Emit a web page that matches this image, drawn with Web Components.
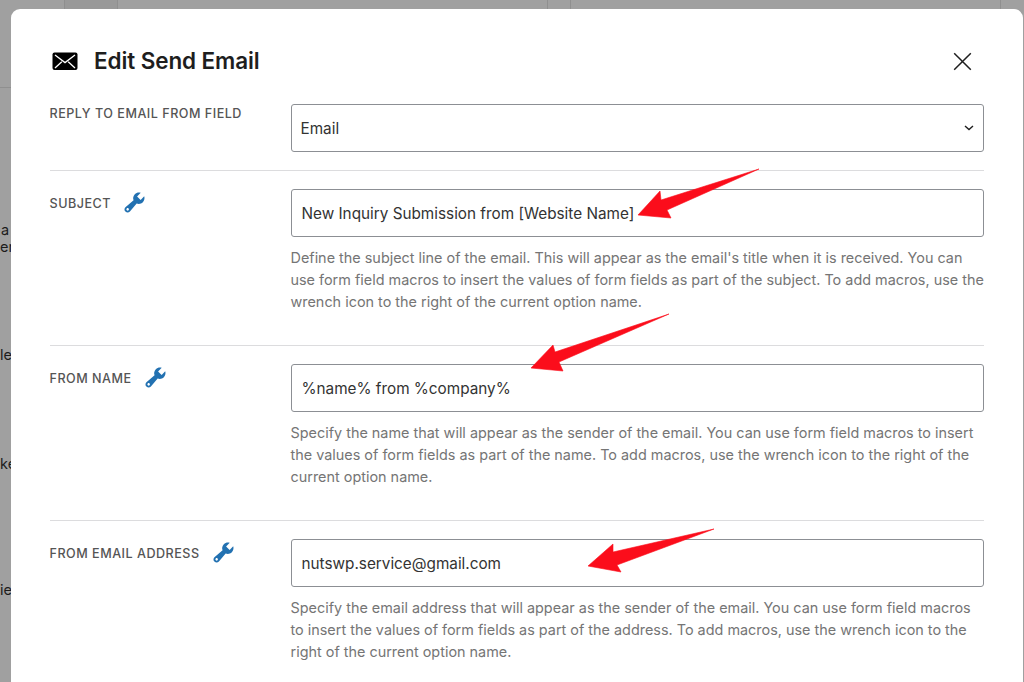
<!DOCTYPE html>
<html>
<head>
<meta charset="utf-8">
<style>
  html, body { margin: 0; height: 100%; overflow: hidden; }
  body { background: #a0a0a0; font-family: Inter, "Liberation Sans", sans-serif; }
</style>
</head>
<body>
<page-backdrop></page-backdrop>
<edit-modal heading="Edit Send Email">
  <field-row label="Reply to email from field" value="Email" select first></field-row>
  <field-row label="Subject" value="New Inquiry Submission from [Website Name]" wrench>
    Define the subject line of the email. This will appear as the email's title when it is received. You can use form field macros to insert the values of form fields as part of the subject. To add macros, use the wrench icon to the right of the current option name.
  </field-row>
  <field-row label="From Name" value="%name% from %company%" wrench>
    Specify the name that will appear as the sender of the email. You can use form field macros to insert the values of form fields as part of the name. To add macros, use the wrench icon to the right of the current option name.
  </field-row>
  <field-row label="From Email Address" value="nutswp.service@gmail.com" wrench>
    Specify the email address that will appear as the sender of the email. You can use form field macros to insert the values of form fields as part of the address. To add macros, use the wrench icon to the right of the current option name.
  </field-row>
</edit-modal>
<red-arrow points="759,169 661,200 660,191 638,215 671,218 667,210"></red-arrow>
<red-arrow points="669,314 555,352 553,345 531,368 563,371 559,362"></red-arrow>
<red-arrow points="714,529 613,552 613,544 588,566 621,572 617,565"></red-arrow>

<script>
const WRENCH = 'M16.68 9.77c-1.34 1.34-3.3 1.67-4.95.99l-5.41 6.52c-.99.99-2.59.99-3.58 0s-.99-2.59 0-3.58l6.52-5.41c-.68-1.65-.35-3.61.99-4.95 1.28-1.28 3.12-1.62 4.72-1.06l-2.89 2.89 2.82 2.82 2.86-2.9c.55 1.6.22 3.42-1.08 4.68zM3.81 16.21c.4.39 1.04.39 1.43 0 .4-.4.4-1.04 0-1.43-.39-.4-1.03-.4-1.43 0-.39.39-.39 1.03 0 1.43z';

class PageBackdrop extends HTMLElement {
  connectedCallback() {
    this.attachShadow({ mode: 'open' });
    this.shadowRoot.innerHTML = `
      <style>
        :host { position: absolute; inset: 0; display: block; overflow: hidden; font-size: 14.5px; color: #1c1c1c; }
        span { position: absolute; line-height: 18px; }
        i { position: absolute; background: #8f8f8f; }
        .cell { left: 65px; top: 0; width: 53px; height: 9px; background: #999; }
      </style>
      <i class="cell"></i>
      <i style="left:64px;top:0;width:1px;height:9px"></i>
      <i style="left:117px;top:0;width:1px;height:9px"></i>
      <i style="left:547px;top:0;width:1px;height:9px"></i>
      <i style="left:570px;top:0;width:1px;height:9px"></i>
      <i style="left:1000px;top:0;width:1px;height:9px"></i>
      <i style="left:0;top:87px;width:11px;height:1px"></i>
      <span style="left:1px;top:221px">a</span>
      <span style="left:0;top:238px">er</span>
      <span style="left:0;top:346px">le</span>
      <span style="left:0;top:455px">ke</span>
      <span style="left:0;top:581px">ie</span>
    `;
  }
}
customElements.define('page-backdrop', PageBackdrop);

class EditModal extends HTMLElement {
  connectedCallback() {
    this.attachShadow({ mode: 'open' });
    this.shadowRoot.innerHTML = `
      <style>
        :host {
          position: absolute;
          top: 9px;
          left: 11px;
          right: 1px;
          height: 720px;
          display: block;
          box-sizing: border-box;
          padding: 0 39px 0 38.5px;
          background: #fff;
          border-radius: 9px;
          color: #1e1e1e;
        }
        header {
          height: 95px;
          display: flex;
          align-items: flex-start;
          padding-top: 43px;
          box-sizing: border-box;
        }
        .mail { width: 26px; height: 18px; margin: 0 16.5px 0 2px; flex: none; }
        h1 { margin: -5px 0 0; font-size: 22.5px; line-height: 28px; font-weight: 600; letter-spacing: -0.1px; color: #1e1e1e; }
        .close { width: 19px; height: 19px; margin-left: auto; margin-right: 12px; flex: none; }
      </style>
      <header>
        <svg class="mail" viewBox="0 0 26 18">
          <rect x="0.5" y="0.5" width="25" height="17.5" rx="2" fill="#000"/>
          <path d="M3 3l10 7.6L23 3M3 16l6.8-6.2M23 16l-6.8-6.2" fill="none" stroke="#fff" stroke-width="1.3"/>
        </svg>
        <h1>${this.getAttribute('heading')}</h1>
        <svg class="close" viewBox="0 0 19 19">
          <path d="M1.2 1.2l16.6 16.6M17.8 1.2L1.2 17.8" fill="none" stroke="#1e1e1e" stroke-width="1.5"/>
        </svg>
      </header>
      <slot></slot>
    `;
  }
}
customElements.define('edit-modal', EditModal);

class FieldRow extends HTMLElement {
  connectedCallback() {
    const isSelect = this.hasAttribute('select');
    this.attachShadow({ mode: 'open' });
    this.shadowRoot.innerHTML = `
      <style>
        :host {
          display: grid;
          grid-template-columns: 241px 1fr;
          padding: 18.5px 0 31.5px;
          border-top: 1px solid #dcdcde;
        }
        :host([first]) { border-top: 0; padding: 0 0 17.5px; }
        :host([first]) .label { padding-top: 0.5px; }
        .label {
          display: flex;
          align-items: flex-start;
          font-size: 12.6px;
          line-height: 18px;
          letter-spacing: 0.5px;
          text-transform: uppercase;
          font-weight: 500;
          color: #555;
          padding-top: 6px;
        }
        .label svg { width: 25px; height: 25px; margin: -5.5px 0 0 11px; fill: #2271b1; flex: none; }
        .box {
          height: 48px;
          box-sizing: border-box;
          border: 1px solid #8c8f94;
          border-radius: 3px;
          display: flex;
          align-items: center;
          padding: 0 10px;
          font-size: 15.3px;
          color: #333;
        }
        .box.select { padding-left: 9px; justify-content: space-between; }
        .box svg { width: 10px; height: 6px; margin-right: -1px; }
        .help {
          margin-top: 9.5px;
          font-size: 14.42px;
          line-height: 22.2px;
          color: #757575;
        }
      </style>
      <div class="label">
        <span>${this.getAttribute('label')}</span>
        ${this.hasAttribute('wrench') ? `<svg viewBox="0 0 20 20"><path d="${WRENCH}"/></svg>` : ''}
      </div>
      <div>
        <div class="box ${isSelect ? 'select' : ''}">
          <span>${this.getAttribute('value')}</span>
          ${isSelect ? '<svg viewBox="0 0 10 6"><path d="M1 1l4 3.6L9 1" fill="none" stroke="#1e1e1e" stroke-width="1.4"/></svg>' : ''}
        </div>
        ${isSelect ? '' : '<div class="help"><slot></slot></div>'}
      </div>
    `;
  }
}
customElements.define('field-row', FieldRow);

class RedArrow extends HTMLElement {
  connectedCallback() {
    this.attachShadow({ mode: 'open' });
    this.shadowRoot.innerHTML = `
      <style>
        :host { position: absolute; inset: 0; display: block; pointer-events: none; }
        svg { display: block; width: 100%; height: 100%; }
      </style>
      <svg viewBox="0 0 1024 682">
        <polygon points="${this.getAttribute('points')}" fill="#fb0d1b" stroke="#fb0d1b" stroke-width="0.6" stroke-linejoin="round"/>
      </svg>
    `;
  }
}
customElements.define('red-arrow', RedArrow);
</script>
</body>
</html>
